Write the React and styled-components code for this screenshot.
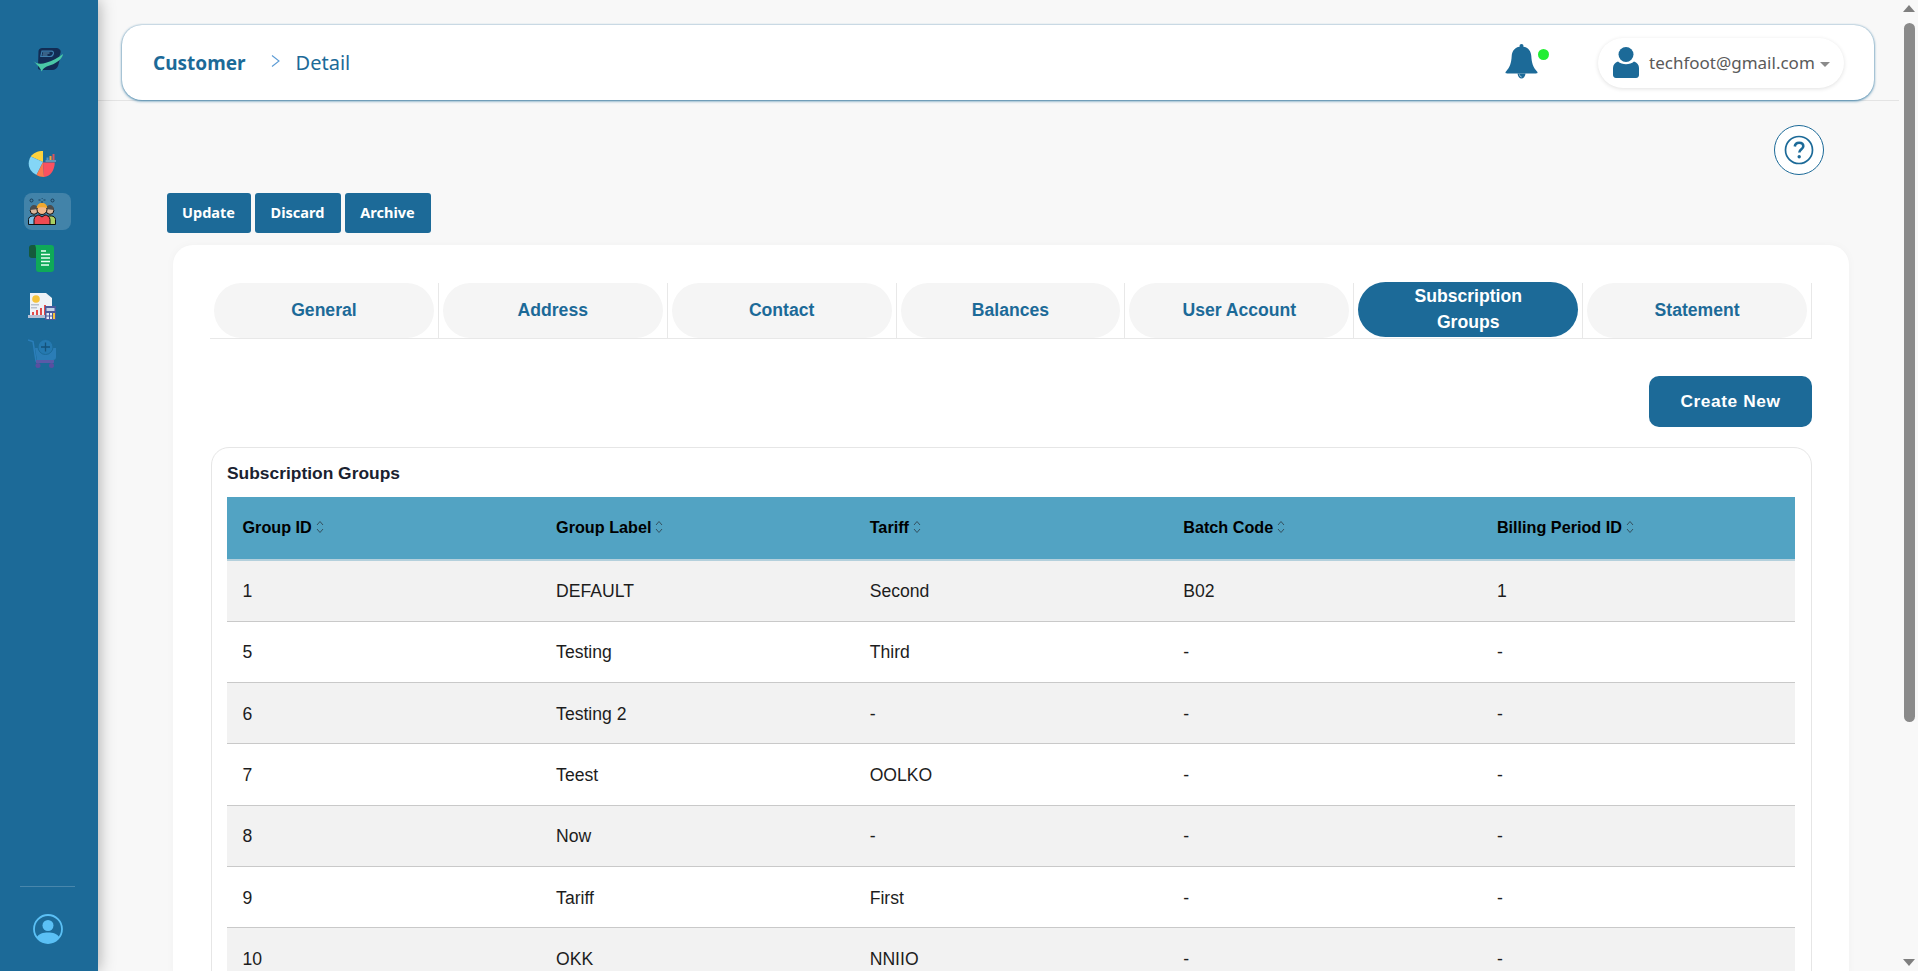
import React from "react";
import styled, { createGlobalStyle } from "styled-components";

const blue = "#1c6a98";

const GlobalStyle = createGlobalStyle`
  html, body {
    margin: 0;
    height: 100%;
    overflow: hidden;
    background: #f8f8f8;
  }
  * { box-sizing: border-box; }
`;

const Shell = styled.div`
  display: flex;
  height: 971px;
  overflow: hidden;
  font-family: "Liberation Sans", Arial, sans-serif;
`;

const Sidebar = styled.aside`
  width: 98px;
  flex: none;
  display: flex;
  flex-direction: column;
  padding: 48px 3px 0 0;
  align-items: center;
  background: ${blue};
  box-shadow: 0 0 16px rgba(0, 0, 0, 0.35);
  z-index: 2;
`;

const Logo = styled.div`
  height: 23px;
  margin: 0 0 74px 0;
  display: flex;
`;

const SideNav = styled.nav`
  display: flex;
  flex-direction: column;
  gap: 10.5px;
`;

const NavItem = styled.a`
  width: 47px;
  height: 37px;
  padding-left: 4px;
  display: flex;
  align-items: center;
  border-radius: 8px;
  background: ${(p) => (p.$active ? "rgba(255,255,255,0.17)" : "transparent")};
`;

const SideFoot = styled.div`
  margin-top: auto;
  width: 55px;
  height: 85px;
  border-top: 1px solid rgba(255, 255, 255, 0.2);
  display: flex;
  justify-content: center;
  padding-top: 27px;
`;

const Main = styled.main`
  flex: 1;
  min-width: 0;
  display: flex;
  flex-direction: column;
`;

const TopBar = styled.header`
  height: 101px;
  flex: none;
  padding: 25px 25px 0 24px;
  border-bottom: 1px solid #e4e4e4;
`;

const TopCard = styled.div`
  height: 75px;
  display: flex;
  align-items: center;
  padding: 0 30px 0 31px;
  background: #fff;
  border-radius: 20px;
  box-shadow: 0 1px 3px rgba(28, 106, 152, 0.8), 0 0 2px rgba(28, 106, 152, 0.4);
  font-family: "Noto Sans", sans-serif;
`;

const Crumb = styled.span`
  font-size: ${(p) => (p.$strong ? "19px" : "20px")};
  color: ${blue};
  font-weight: ${(p) => (p.$strong ? 700 : 400)};
`;

const CrumbSep = styled.span`
  display: flex;
  margin: -4px 16px 0 25px;
`;

const TopRight = styled.div`
  margin-left: auto;
  display: flex;
  align-items: center;
`;

const BellWrap = styled.div`
  position: relative;
  display: flex;
  margin: -2px 60px 0 0;
`;

const BellDot = styled.span`
  position: absolute;
  top: 5px;
  left: 33px;
  width: 11px;
  height: 11px;
  border-radius: 50%;
  background: #22ee33;
`;

const UserPill = styled.div`
  width: 246px;
  height: 50px;
  display: flex;
  align-items: center;
  padding-left: 15px;
  border-radius: 25px;
  background: #fff;
  box-shadow: 0 1px 4px rgba(0, 0, 0, 0.12);
`;

const Email = styled.span`
  margin-left: 10px;
  font-size: 17px;
  color: #5a5a5a;
`;

const Caret = styled.span`
  margin: 3px 0 0 5px;
  border-left: 5px solid transparent;
  border-right: 5px solid transparent;
  border-top: 5px solid #8b8b8b;
`;

const Content = styled.div`
  padding: 24px 50px 0 69px;
`;

const HelpRow = styled.div`
  display: flex;
  justify-content: flex-end;
  padding-right: 25px;
  height: 50px;
`;

const HelpButton = styled.button`
  width: 50px;
  height: 50px;
  padding: 0;
  display: flex;
  align-items: center;
  justify-content: center;
  border: 1px solid ${blue};
  border-radius: 50%;
  background: #fff;
`;

const Actions = styled.div`
  display: flex;
  gap: 4px;
  margin-top: 18px;
`;

const ActionButton = styled.button`
  width: ${(p) => p.$w}px;
  height: 40px;
  padding: 0 1px 2px 0;
  border: 0;
  border-radius: 3px;
  background: ${blue};
  color: #fff;
  font-family: "Noto Sans", sans-serif;
  font-size: 14.5px;
  font-weight: 700;
`;

const Card = styled.section`
  margin: 12px 0 0 6px;
  padding: 38px 37px 0 37px;
  background: #fff;
  border-radius: 20px;
  box-shadow: 0 0 10px rgba(0, 0, 0, 0.03);
`;

const Tabs = styled.div`
  display: grid;
  grid-template-columns: repeat(7, 1fr);
  border-bottom: 1px solid #e8e8e8;
`;

const TabCell = styled.div`
  height: 55px;
  padding: 0 4px;
  border-right: 1px solid #e8e8e8;
  display: flex;
`;

const Tab = styled.button`
  flex: 1;
  height: 55px;
  margin-top: ${(p) => (p.$active ? "-1px" : "0")};
  padding: 0 40px 2px;
  border: 0;
  border-radius: 28px;
  background: ${(p) => (p.$active ? blue : "#f5f5f5")};
  color: ${(p) => (p.$active ? "#fff" : blue)};
  font-family: inherit;
  font-size: 17.6px;
  font-weight: 700;
  line-height: 26px;
`;

const CreateRow = styled.div`
  display: flex;
  justify-content: flex-end;
  margin-top: 37px;
`;

const CreateButton = styled.button`
  width: 163px;
  height: 51px;
  padding: 0;
  border: 0;
  border-radius: 10px;
  background: ${blue};
  color: #fff;
  font-family: inherit;
  font-size: 17.3px;
  font-weight: 700;
  letter-spacing: 0.6px;
`;

const Panel = styled.div`
  margin: 20px 0 0 1px;
  padding: 0 16px 0 15px;
  border: 1px solid #e6e6e6;
  border-radius: 18px;
  background: #fff;
`;

const PanelTitle = styled.h3`
  margin: 0;
  height: 49px;
  padding-top: 15px;
  font-size: 17.4px;
  line-height: 20px;
  font-weight: 700;
  color: #1a2230;
`;

const Table = styled.table`
  width: 100%;
  border-collapse: collapse;
  table-layout: fixed;
`;

const Th = styled.th`
  height: 63px;
  padding: 0 16px 2px 15.5px;
  background: #52a3c3;
  border-bottom: 2px solid #b4d0dc;
  text-align: left;
  font-size: 16.2px;
  font-weight: 700;
  color: #000;
`;

const SortMark = styled.svg`
  margin-left: 4px;
  vertical-align: -1px;
`;

const Tr = styled.tr`
  background: ${(p) => (p.$odd ? "#f2f2f2" : "#fff")};
`;

const Td = styled.td`
  height: 61.3px;
  padding: 2px 16px 0 15.5px;
  border-bottom: 1px solid #c9c9c9;
  font-size: 17.6px;
  color: #1d1d1d;
`;

const ScrollStrip = styled.div`
  width: 19px;
  flex: none;
  display: flex;
  flex-direction: column;
  align-items: center;
  padding: 5px 0 5px 1px;
  background: #f8f8f8;
`;

const ScrollArrow = styled.span`
  border-left: 6px solid transparent;
  border-right: 6px solid transparent;
  ${(p) => (p.$down ? "border-top: 7px solid #7f7f7f;" : "border-bottom: 7px solid #7f7f7f;")}
`;

const ScrollThumb = styled.div`
  width: 11px;
  height: 699px;
  margin-top: 11px;
  border-radius: 6px;
  background: #8a8a8a;
`;

const ScrollRest = styled.div`
  flex: 1;
`;

const LogoIcon = () => (
  <svg width="30" height="24" viewBox="0 0 30 24">
    <path d="M5.500 2.800C6 1 7.500 0 9 0h13.500C26 0 28.500 2 27.500 5l-1 3c.5 1 .6 2.300.2 3.500l-1.500 6C24.500 20 22 22 19 22H8c-2 0-3.500-1-3-3z" fill="#122c54" />
    <path d="M9 3.200h9.500c1.700 0 2.300 1.300 1.800 2.800-.5 1.500-1.700 2.500-3.300 2.500H7.800z" fill="none" stroke="#3e7fae" strokeWidth="1.200" />
    <path d="M10 5h6.500M9.500 7h5" stroke="#6aa3c6" strokeWidth=".9" />
    <path d="M0 12.500C3 16 8 16.300 13 14.800 19 13 25 10 30 6c-.5 4.500-6 9-12 11-4 1.400-7.500 2.500-9.500 6.500-1-4-5-7-8.500-11z" fill="#4ac8a6" />
  </svg>
);

const PieIcon = () => (
  <svg width="28" height="26" viewBox="0 0 28 26">
    <path d="M15 11V0C9.500 0 5.200 2 2.800 5.500z" fill="#fdd23e" />
    <path d="M15 11L2.800 5.500C-1 11.500 0 20 8.500 24z" fill="#84d6f6" />
    <path d="M15 11L8.500 24c2 1.300 4 2 7.500 2z" fill="#fb7a4e" />
    <path d="M15 11.500l1 14.500c6-.5 10.500-6 10.800-14.500z" fill="#fb5160" />
    <path d="M18.500 9h2V6.500h-2z" fill="#4d8fd0" />
    <path d="M21.500 9h2V5h-2z" fill="#f0a43a" />
    <path d="M24.500 9h2V3h-2z" fill="#d9535c" />
    <path d="M17.500 10H28" stroke="#c6d7e2" strokeWidth=".8" />
  </svg>
);

const PeopleIcon = () => (
  <svg width="28" height="27" viewBox="0 0 28 27">
    <circle cx="3.500" cy="2.500" r="1.500" fill="none" stroke="#173b57" strokeWidth="1" />
    <circle cx="24.500" cy="2.500" r="1.500" fill="none" stroke="#173b57" strokeWidth="1" />
    <path d="M10.500 2h2M15.500 2h2M13.500 0h1.500M14 3v2" stroke="#173b57" strokeWidth="1" />
    <path d="M.5 26.500v-5c0-2 2-3.500 4-3.500h3v8.500z" fill="#7fbfe6" stroke="#111" strokeWidth="1" />
    <path d="M27.500 26.500v-5c0-2-2-3.500-4-3.500h-3v8.500z" fill="#a9cf62" stroke="#111" strokeWidth="1" />
    <circle cx="6" cy="12.500" r="3.800" fill="#d9b59a" stroke="#111" strokeWidth="1" />
    <circle cx="22" cy="12.500" r="3.800" fill="#d9b59a" stroke="#111" strokeWidth="1" />
    <path d="M2 12c0-3.500 2-5 4-5s4 1.500 4 4zM18 11c0-2.500 2-4 4-4s4 1.500 4 5z" fill="#4d4d4d" />
    <path d="M6 26.500v-5c0-2.500 3-4.500 5-4.500l3 2 3-2c2 0 5 2 5 4.500v5z" fill="#ef4a52" stroke="#111" strokeWidth="1" />
    <circle cx="14" cy="11.500" r="5" fill="#f2b78a" stroke="#111" strokeWidth="1" />
    <path d="M8.800 10.500C8.500 7 11 5 14 5s5.500 2 5.200 5.500C17 8.800 11 8.800 8.800 10.500z" fill="#f0a830" />
  </svg>
);

const SheetIcon = () => (
  <svg width="26" height="27" viewBox="0 0 26 27" style={{ marginLeft: 1 }}>
    <path d="M3 0h7v13H3c-2 0-3-1-3-2.500V3c0-2 1-3 3-3z" fill="#155a3c" />
    <path d="M6 0h16c2 0 3 1 3 3v21c0 2-1 3-3 3H10c-2 0-3-1-3-3V4c0-2-.5-3-1-4z" fill="#0fa958" />
    <path d="M12 6h5M12 9.500h9M12 13h9M12 16.500h9M12 20h8" stroke="#e9fff3" strokeWidth="1.500" />
  </svg>
);

const ReportIcon = () => (
  <svg width="28" height="27" viewBox="0 0 28 27">
    <path d="M2 0h16l6 5v19H2z" fill="#eef2f7" />
    <path d="M0 22h22v3H0z" fill="#b5bfd4" />
    <circle cx="8" cy="6" r="3.800" fill="#f5c33b" />
    <path d="M3 11h8v1.500H3zM3 14h6v1.500H3z" fill="#b9c2cf" />
    <path d="M4 19h2v3H4zM8 17h2v5H8zM12 15h2v7h-2zM16 12h2v10h-2z" fill="#e24b4b" />
    <path d="M17 13h11v14H17z" fill="#4a5a9c" />
    <path d="M18.500 15h8v3h-8z" fill="#c4d4e8" />
    <path d="M18.500 20h2.500v2.500h-2.500zM22 20h2v2.500h-2zM18.500 23.500h2.500V26h-2.500zM22 23.500h2V26h-2z" fill="#e8ecf5" />
    <path d="M25 20h2v6h-2z" fill="#f5c33b" />
  </svg>
);

const CartIcon = () => (
  <svg width="28" height="29" viewBox="0 0 28 29">
    <path d="M0 1l5 1.500L8 22h18" fill="none" stroke="#2b7fbb" strokeWidth="1.500" />
    <path d="M7 9h21v9c0 2-1 3-3 3H9z" fill="#2b7db6" />
    <path d="M8 21h18v2c0 .6-.5 1-1 1H8z" fill="#5a5aa8" />
    <circle cx="17.500" cy="8" r="7.500" fill="#2579b0" stroke="#1c6a98" strokeWidth="1" />
    <path d="M17.500 3.500v9M13 8h9" stroke="#14527a" strokeWidth="1.300" />
    <circle cx="10" cy="26.500" r="2.500" fill="#5a4fa0" />
    <circle cx="23.500" cy="26.500" r="2.500" fill="#5a4fa0" />
  </svg>
);

const AvatarIcon = () => (
  <svg width="30" height="30" viewBox="0 0 30 30">
    <circle cx="15" cy="15" r="14" fill="none" stroke="#5bc0f5" strokeWidth="1.800" />
    <circle cx="15" cy="11.500" r="5.500" fill="#5bc0f5" />
    <path d="M3.500 23.500C6 19.500 10 18.500 15 18.500s9 1 11.500 5c-3 3.500-7 5.500-11.500 5.500s-8.500-2-11.500-5.500z" fill="#5bc0f5" />
  </svg>
);

const Chevron = () => (
  <svg width="9" height="12" viewBox="0 0 9 12">
    <path d="M1 .5L8 6l-7 5.500" fill="none" stroke="#5b9bd5" strokeWidth="1.100" />
  </svg>
);

const BellIcon = () => (
  <svg width="33" height="35" viewBox="0 0 33 35">
    <circle cx="16.500" cy="2" r="2" fill={blue} />
    <path d="M16.500 2.500C10 2.500 7 7 6.700 12 6.300 19 5 23 1 27.500.0 28.700.5 29.500 2 29.500h29c1.500 0 2-.8 1-2-4-4.500-5.300-8.500-5.700-15.500C26 7 23 2.500 16.500 2.500z" fill={blue} />
    <path d="M12.500 29.500c.5 3.500 2 5 4 5s3.500-1.500 4-5z" fill={blue} />
    <path d="M14.500 30.500c.3 1.500 1 2.500 2.200 2.500" fill="none" stroke="#cfe3ef" strokeWidth=".8" />
  </svg>
);

const UserIcon = () => (
  <svg width="26" height="31" viewBox="0 0 26 31">
    <circle cx="13" cy="7.500" r="7.500" fill={blue} />
    <path d="M5 14.500c2 2 5 2.700 8 2.700s6-.7 8-2.700c3 1 5 3.500 5 6.500v7c0 1.500-1 3-3 3H3c-2 0-3-1.500-3-3v-7c0-3 2-5.500 5-6.500z" fill={blue} />
  </svg>
);

const HelpIcon = () => (
  <svg width="30" height="30" viewBox="0 0 30 30">
    <circle cx="15" cy="15" r="13.500" fill="none" stroke={blue} strokeWidth="1.700" />
    <path d="M10.800 11.500c.3-2.500 2-3.700 4.300-3.700 2.500 0 4.200 1.400 4.200 3.400 0 3-4 3-4 6.300" fill="none" stroke={blue} strokeWidth="2.600" />
    <circle cx="15.200" cy="21.700" r="1.700" fill={blue} />
  </svg>
);

const SortIcon = () => (
  <SortMark width="8" height="14" viewBox="0 0 8 14">
    <path d="M1 5l3-3.500L7 5M1 9l3 3.500L7 9" fill="none" stroke="#33505f" strokeWidth="1" />
  </SortMark>
);

const tabs = ["General", "Address", "Contact", "Balances", "User Account", "Subscription Groups", "Statement"];
const columns = ["Group ID", "Group Label", "Tariff", "Batch Code", "Billing Period ID"];
const rows = [
  ["1", "DEFAULT", "Second", "B02", "1"],
  ["5", "Testing", "Third", "-", "-"],
  ["6", "Testing 2", "-", "-", "-"],
  ["7", "Teest", "OOLKO", "-", "-"],
  ["8", "Now", "-", "-", "-"],
  ["9", "Tariff", "First", "-", "-"],
  ["10", "OKK", "NNIIO", "-", "-"],
];

const App = () => {
  return (
    <Shell>
      <GlobalStyle />
      <Sidebar>
        <Logo>
          <LogoIcon />
        </Logo>
        <SideNav>
          <NavItem><PieIcon /></NavItem>
          <NavItem $active><PeopleIcon /></NavItem>
          <NavItem><SheetIcon /></NavItem>
          <NavItem><ReportIcon /></NavItem>
          <NavItem><CartIcon /></NavItem>
        </SideNav>
        <SideFoot>
          <AvatarIcon />
        </SideFoot>
      </Sidebar>
      <Main>
        <TopBar>
          <TopCard>
            <Crumb $strong>Customer</Crumb>
            <CrumbSep><Chevron /></CrumbSep>
            <Crumb>Detail</Crumb>
            <TopRight>
              <BellWrap>
                <BellIcon />
                <BellDot />
              </BellWrap>
              <UserPill>
                <UserIcon />
                <Email>techfoot@gmail.com</Email>
                <Caret />
              </UserPill>
            </TopRight>
          </TopCard>
        </TopBar>
        <Content>
          <HelpRow>
            <HelpButton><HelpIcon /></HelpButton>
          </HelpRow>
          <Actions>
            <ActionButton $w={84}>Update</ActionButton>
            <ActionButton $w={86}>Discard</ActionButton>
            <ActionButton $w={86}>Archive</ActionButton>
          </Actions>
          <Card>
            <Tabs>
              {tabs.map((t) => (
                <TabCell key={t}>
                  <Tab $active={t === "Subscription Groups"}>{t}</Tab>
                </TabCell>
              ))}
            </Tabs>
            <CreateRow>
              <CreateButton>Create New</CreateButton>
            </CreateRow>
            <Panel>
              <PanelTitle>Subscription Groups</PanelTitle>
              <Table>
                <thead>
                  <tr>
                    {columns.map((c) => (
                      <Th key={c}>{c}<SortIcon /></Th>
                    ))}
                  </tr>
                </thead>
                <tbody>
                  {rows.map((r, i) => (
                    <Tr key={r[0]} $odd={i % 2 === 0}>
                      {r.map((v, j) => (
                        <Td key={j}>{v}</Td>
                      ))}
                    </Tr>
                  ))}
                </tbody>
              </Table>
            </Panel>
          </Card>
        </Content>
      </Main>
      <ScrollStrip>
        <ScrollArrow />
        <ScrollThumb />
        <ScrollRest />
        <ScrollArrow $down />
      </ScrollStrip>
    </Shell>
  );
};

export default App;
